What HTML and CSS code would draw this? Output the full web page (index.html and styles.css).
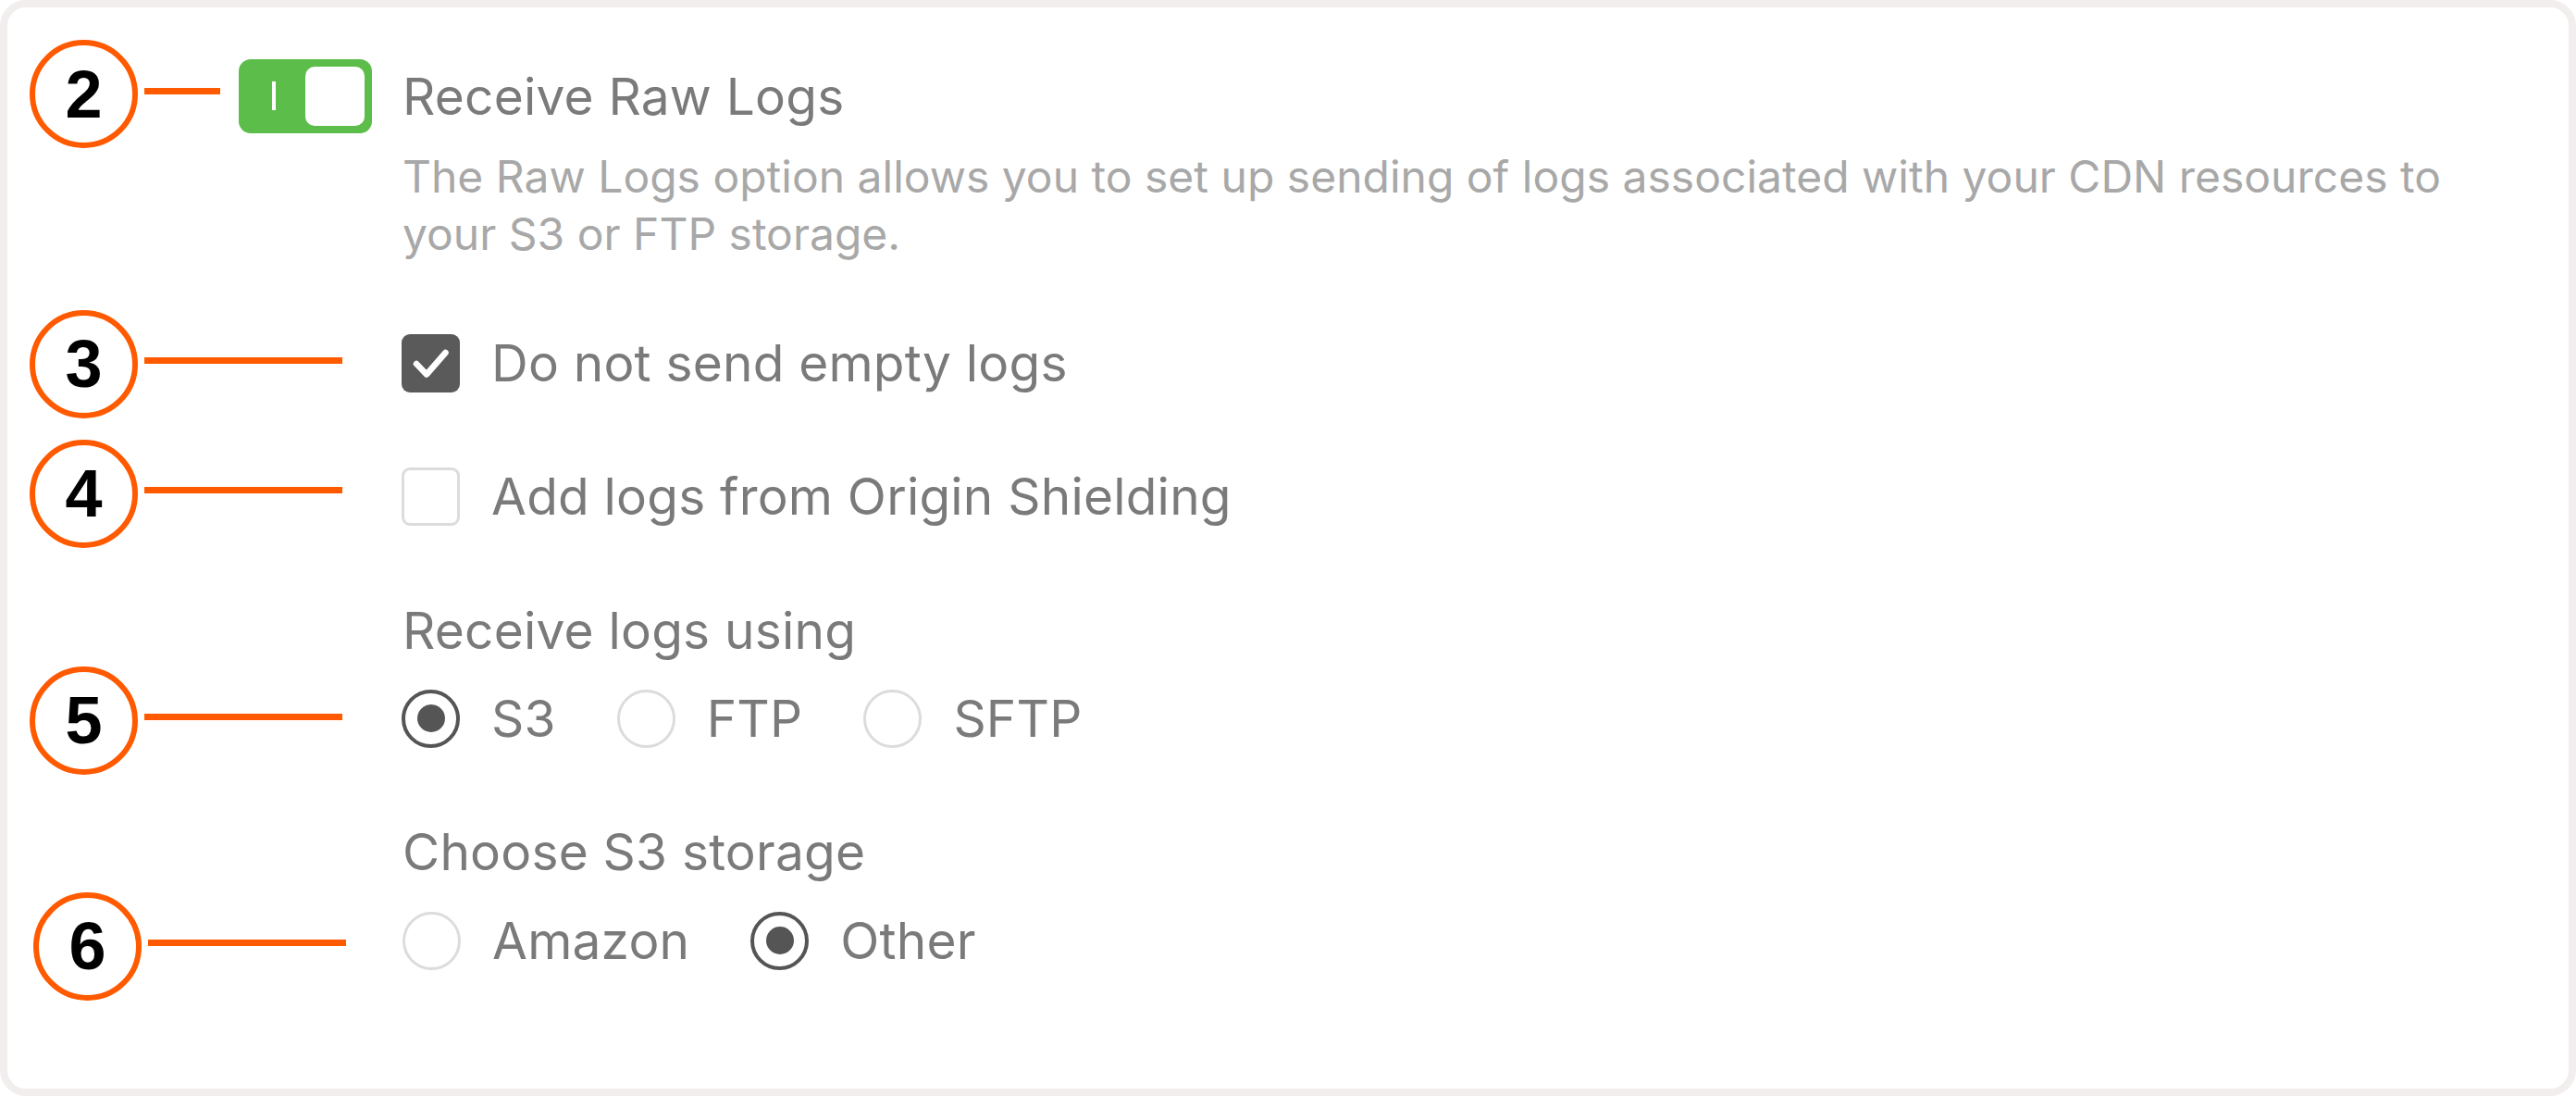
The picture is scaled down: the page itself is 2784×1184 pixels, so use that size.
FILE: index.html
```html
<!DOCTYPE html>
<html lang="en">
<head>
<meta charset="utf-8">
<title>Raw Logs settings</title>
<link rel="stylesheet" href="styles.css">
</head>
<body>
<main class="card">

  <section class="row row-switch">
    <div class="callout callout-short">
      <span class="badge">2</span><span class="leader"></span>
    </div>
    <div class="switch is-on" role="switch" aria-checked="true">
      <span class="switch-mark"></span>
      <span class="switch-knob"></span>
    </div>
    <div class="switch-text">
      <div class="title">Receive Raw Logs</div>
      <p class="desc">The Raw Logs option allows you to set up sending of logs associated with your CDN resources to your S3 or FTP storage.</p>
    </div>
  </section>

  <section class="row row-opt row-3">
    <div class="callout"><span class="badge">3</span><span class="leader"></span></div>
    <label class="check">
      <span class="box is-checked">
        <svg viewBox="0 0 63 63" width="63" height="63"><path d="M16 32 L27 43.5 L47.5 20" fill="none" stroke="#fff" stroke-width="6.5" stroke-linecap="round" stroke-linejoin="round"/></svg>
      </span>
      <span class="text">Do not send empty logs</span>
    </label>
  </section>

  <section class="row row-opt row-4">
    <div class="callout"><span class="badge">4</span><span class="leader"></span></div>
    <label class="check">
      <span class="box"></span>
      <span class="text">Add logs from Origin Shielding</span>
    </label>
  </section>

  <div class="group-label label-5">Receive logs using</div>
  <section class="row row-opt row-5">
    <div class="callout"><span class="badge">5</span><span class="leader"></span></div>
    <div class="radios">
      <label class="radio"><span class="dot is-checked"></span><span class="text">S3</span></label>
      <label class="radio"><span class="dot"></span><span class="text">FTP</span></label>
      <label class="radio"><span class="dot"></span><span class="text">SFTP</span></label>
    </div>
  </section>

  <div class="group-label label-6">Choose S3 storage</div>
  <section class="row row-opt row-6">
    <div class="callout"><span class="badge">6</span><span class="leader"></span></div>
    <div class="radios">
      <label class="radio"><span class="dot"></span><span class="text">Amazon</span></label>
      <label class="radio"><span class="dot is-checked"></span><span class="text">Other</span></label>
    </div>
  </section>

</main>
</body>
</html>
```

FILE: styles.css
```css
* { box-sizing: border-box; }

html, body {
  margin: 0;
  padding: 0;
  background: #ffffff;
}

body {
  font-family: "Inter", "Noto Sans", sans-serif;
  color: #7a7a7a;
}

/* outer frame */
.card {
  width: 100vw;
  height: 100vh;
  border: 8px solid #f3eeee;
  border-radius: 28px;
  background: #ffffff;
  padding: 35px 0 0 24px;
  display: flex;
  flex-direction: column;
}

/* numbered callouts */
.callout {
  display: flex;
  align-items: center;
  flex: none;
  --leader: 214px;
}
.callout-short { --leader: 82px; }

.badge {
  width: 117px;
  height: 117px;
  border: 6px solid #ff5a00;
  border-radius: 50%;
  display: flex;
  align-items: center;
  justify-content: center;
  font-family: "Liberation Sans", Arial, sans-serif;
  font-weight: 700;
  font-size: 72px;
  line-height: 1;
  color: #000;
  flex: none;
}

.leader {
  width: var(--leader);
  height: 7px;
  margin-left: 7px;
  margin-bottom: 7px;
  background: #ff5a00;
  flex: none;
}

/* rows */
.row {
  display: flex;
}

.row-switch {
  align-items: flex-start;
}

.row-opt {
  height: 64px;
  align-items: center;
}

.row-opt > :last-child { margin-left: 64px; }

.row-3 { margin-top: 76px; }
.row-3 .callout { margin-top: 2px; }
.row-4 { margin-top: 80px; }
.row-4 .callout { margin-bottom: 6px; }
.row-5 { margin-top: 31px; }
.row-5 .callout { margin-top: 4px; }
.row-6 { margin-top: 32px; }
.row-6 .callout { margin-top: 12px; margin-left: 4px; }
.row-6 > :last-child { margin-left: 61px; }

/* switch */
.switch {
  position: relative;
  width: 144px;
  height: 80px;
  margin: 21px 0 0 20px;
  border-radius: 13px;
  background: #5cbd4a;
  flex: none;
}
.switch-mark {
  position: absolute;
  left: 36px;
  top: 24px;
  width: 4px;
  height: 31px;
  background: #ffffff;
}
.switch-knob {
  position: absolute;
  right: 8px;
  top: 8px;
  width: 64px;
  height: 64px;
  border-radius: 10px;
  background: #ffffff;
}

.switch-text {
  margin: 21px 0 0 33px;
}

.title {
  font-size: 55px;
  letter-spacing: 0.2px;
  line-height: 80px;
  color: #7a7a7a;
}

.desc {
  margin: 16px 0 0;
  max-width: 2235px;
  font-size: 48px;
  line-height: 62px;
  color: #a8a8a8;
}

/* checkbox */
.check, .radio {
  display: flex;
  align-items: center;
}

.box {
  width: 63px;
  height: 63px;
  border: 3px solid #dcdcdc;
  border-radius: 9px;
  background: #fff;
  flex: none;
  position: relative;
}
.box.is-checked {
  border: none;
  background: #5a5a5a;
}
.box svg { display: block; }

.text {
  margin-left: 34px;
  font-size: 55px;
  letter-spacing: 0.2px;
  line-height: 64px;
  color: #7a7a7a;
  white-space: nowrap;
}

/* radio buttons */
.radios {
  display: flex;
  align-items: center;
  gap: 66px;
}

.dot {
  width: 63px;
  height: 63px;
  border-radius: 50%;
  border: 3px solid #dcdcdc;
  background: #fff;
  flex: none;
  display: flex;
  align-items: center;
  justify-content: center;
}
.dot.is-checked {
  border: 4px solid #555555;
}
.dot.is-checked::after {
  content: "";
  width: 30px;
  height: 30px;
  border-radius: 50%;
  background: #555555;
}

/* section labels */
.group-label {
  padding-left: 403px;
  font-size: 55px;
  letter-spacing: 0.2px;
  line-height: 64px;
  color: #7a7a7a;
}
.label-5 { margin-top: 81px; }
.label-6 { margin-top: 80px; }
```
